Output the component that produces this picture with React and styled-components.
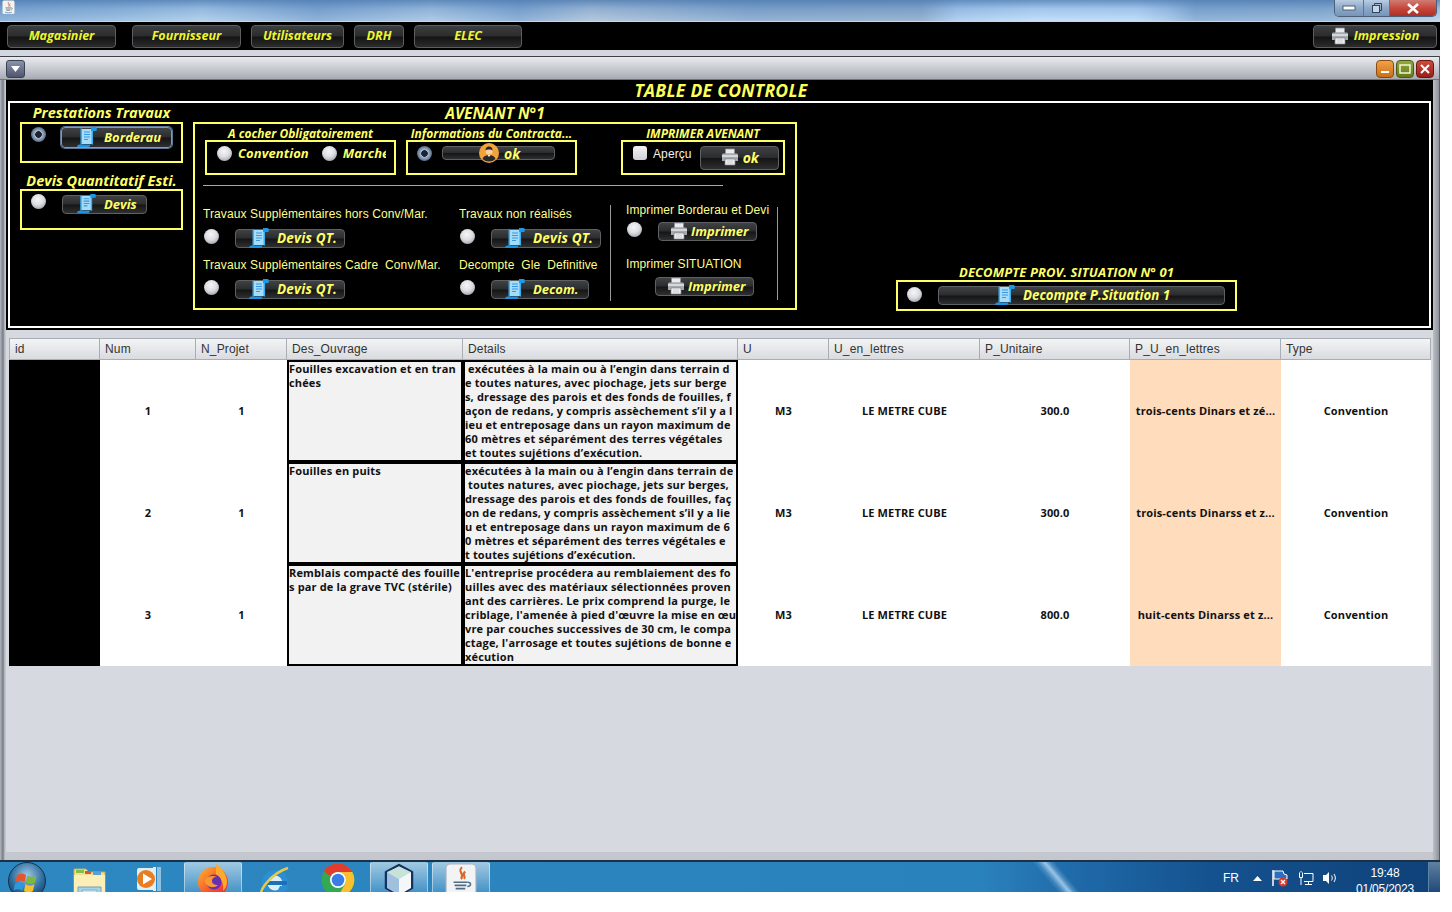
import React from 'react';
import styled, { createGlobalStyle } from 'styled-components';

const Global = createGlobalStyle`
  html, body { margin: 0; padding: 0; background: #fff; }
  * { box-sizing: border-box; }
`;
const UI = `"Open Sans", "Noto Sans", "Liberation Sans", sans-serif`;
const ARIAL = `"Liberation Sans", Arial, sans-serif`;

const Page = styled.div`
  width: 1440px; height: 892px; overflow: hidden; display: flex; flex-direction: column; background: #d3d8e0;
`;
const TitleBar = styled.div`
  height: 22px; flex: none; display: flex; justify-content: space-between; padding-left: 2px;
  border-bottom: 1px solid #c8d6e6;
  background:
    linear-gradient(180deg, rgba(74,120,175,.75) 0%, rgba(90,135,190,.25) 40%, rgba(255,255,255,.18) 100%),
    linear-gradient(90deg, #7ba5d2 0%, #8db5dc 8%, #a5c8e8 14%, #7ba3d0 22%, #9fc0e0 30%, #7ba3cf 36%, #a5bdd6 41%, #7fa3ca 52%, #86a6c8 64%, #a5c9ee 66.500%, #b8d9f9 72%, #b5d6f7 79%, #a0c4e8 81%, #7fa6cf 83%, #86abd0 92%, #b5cde2 100%);
`;
const WinControls = styled.div`
  width: 103px; height: 17px; margin-right: 3px; display: flex; border: 1px solid #4a5f78; border-top: 0;
  border-radius: 0 0 5px 5px; overflow: hidden;
`;
const WinBtn = styled.div`
  width: ${p => p.$w}px; display: flex; align-items: center; justify-content: center;
  background: ${p => p.$close ? 'linear-gradient(180deg,#cf7d72 0%,#c8443a 55%,#a93226 100%)' : 'linear-gradient(180deg,#b9cde3,#8da9c8 50%,#7595b9)'};
  & + & { border-left: 1px solid #5c7590; }
`;
const Toolbar = styled.div`
  height: 28px; flex: none; background: #000; display: flex; align-items: flex-start; padding: 3px 3px 0 7px;
`;
const ToolBtn = styled.div`
  width: ${p => p.$w}px; height: 23px; margin-right: ${p => p.$mr || 0}px; margin-left: ${p => p.$auto ? 'auto' : '0'};
  padding-bottom: 2px;
  border: 1px solid #5c5e62; border-radius: 4px; display: flex; align-items: center; justify-content: center; gap: 5px;
  background: linear-gradient(180deg, #3d3e40 0%, #2a2b2c 48%, #141414 52%, #2b2b2c 100%);
  color: #eef62a; font: italic 700 12.500px ${UI};
`;
const Strip = styled.div` height: 6px; flex: none; background: #d3d8e0; `;
const Frame = styled.div`
  flex: none; height: 804px; display: flex; flex-direction: column; padding: 0 6px 8px;
  border-top: 1px solid #3e4046; border-right: 1px solid #5a5d63;
  background: linear-gradient(90deg, #b3b7bf 0, #777c85 3px, #c4c7cd 5px, #c4c7cd 1432px, #8e929a 100%);
`;
const FrameHead = styled.div`
  margin: 0 -6px; height: 23px; flex: none; padding: 3px 5px 0 6px; display: flex; justify-content: space-between;
  border-bottom: 1px solid #6f737a;
  background: linear-gradient(180deg, #e8eaed 0%, #c6c9cf 55%, #a8abb3 100%);
`;
const MenuBtn = styled.div`
  width: 19px; height: 18px; border: 1px solid #3a4152; border-radius: 3px; display: flex; align-items: center; justify-content: center;
  background: linear-gradient(180deg, #8a93a8, #4d566e);
`;
const HeadBtns = styled.div` display: flex; gap: 2px; `;
const HeadBtn = styled.div`
  width: 18px; height: 18px; border-radius: 4px; border: 1px solid ${p => p.$edge}; display: flex; align-items: center; justify-content: center;
  background: linear-gradient(180deg, ${p => p.$from}, ${p => p.$to});
`;
const Panel = styled.div`
  background: #000; height: 250px; flex: none; padding: 0 2px 2px; display: flex; flex-direction: column;
`;
const MainTitle = styled.div`
  height: 21px; flex: none; text-align: center; color: #ffff5a; font: italic 700 17.500px/21px ${UI}; letter-spacing: .3px; padding-left: 3px;
`;
const WhiteBox = styled.div`
  flex: 1; border: 2px solid #fff; display: flex; padding-left: 10px; gap: 10px; align-items: flex-start;
`;
const LeftCol = styled.div` width: 163px; flex: none; display: flex; flex-direction: column; `;
const SecTitle = styled.div`
  height: ${p => p.$h}px; margin-top: ${p => p.$mt || 0}px; line-height: ${p => p.$lh || p.$h}px; text-align: center; white-space: nowrap;
  color: #ffff66; font-family: ${UI}; font-style: italic; font-weight: 700; font-size: ${p => p.$fs || 14.5}px; letter-spacing: ${p => p.$ls ?? 0}px;
`;
const YBox = styled.div`
  width: ${p => p.$w}px; height: ${p => p.$h}px; border: 2px solid #ffff66; display: flex; align-items: flex-start;
  padding: ${p => p.$pad || '0'};
`;
const Radio = styled.span`
  width: 15px; height: 15px; flex: none; border-radius: 50%; display: block; margin: ${p => p.$m || 0};
  background: ${p => p.$on
    ? 'radial-gradient(circle at 50% 50%, #1c2430 0 3px, #a8bad0 3.6px, #7f92ab 5.600px, #556a85 7.500px)'
    : 'radial-gradient(circle at 45% 35%, #f6f6f8 0, #dcdde2 45%, #a3a5ad 80%, #777a83 100%)'};
`;
const Check = styled.span`
  width: 14px; height: 14px; flex: none; border-radius: 3px; display: block;
  background: linear-gradient(180deg, #f4f4f6, #cfd1d6);
`;
const GBtn = styled.div`
  width: ${p => p.$w}px; height: ${p => p.$h || 19}px; flex: none; margin: ${p => p.$m || 0}; display: flex; align-items: center;
  gap: ${p => p.$gap ?? 8}px; padding: 0 0 ${p => p.$pb ?? 2}px ${p => p.$pl || 0}px;
  border: 1px solid ${p => p.$focus ? '#7f9bbd' : '#5e6064'}; border-radius: 4px; box-shadow: ${p => p.$focus ? '0 0 0 1px #5b7694' : 'none'};
  background: linear-gradient(180deg, #404143 0%, #2b2c2d 48%, #151515 52%, #2e2f30 100%);
  color: #ffff66; font-family: ${UI}; font-style: italic; font-weight: 700; font-size: ${p => p.$fs || 13}px; letter-spacing: ${p => p.$ls || 0}px; white-space: nowrap;
`;
const OptLabel = styled.span`
  color: #ffff66; font: italic 700 13px/14px ${UI}; letter-spacing: .1px; margin: ${p => p.$m || 0}; white-space: nowrap;
  ${p => p.$clip && `width: ${p.$clip}px; overflow: hidden;`}
`;
const Avenant = styled.div` width: 604px; flex: none; display: flex; flex-direction: column; `;
const AvBox = styled.div`
  height: 188px; border: 2px solid #ffff66; display: flex; flex-direction: column; padding-left: 10px;
`;
const TopRow = styled.div` display: flex; height: 51px; flex: none; `;
const Group = styled.div` margin-left: ${p => p.$ml || 0}px; `;
const Sep = styled.div` width: 520px; height: 1px; background: #a8a8a8; margin: 10px 0 0 -2px; flex: none; `;
const Lower = styled.div` display: flex; margin-left: -2px; `;
const LCol = styled.div` width: ${p => p.$w}px; flex: none; padding-top: 20px; `;
const PLabel = styled.div`
  height: 14px; font: 12px/${p => p.$lh || 16}px ${ARIAL}; color: ${p => p.$white ? '#f2f2f2' : '#ffff8c'}; white-space: pre; letter-spacing: .1px;
  margin: ${p => p.$m || 0};
`;
const BtnRow = styled.div` display: flex; align-items: flex-start; margin-top: ${p => p.$mt ?? 9}px; margin-bottom: ${p => p.$mb ?? 9}px; padding-left: ${p => p.$pl || 0}px; `;
const VLine = styled.div` width: 1px; height: ${p => p.$h}px; background: #9a9a9a; margin-top: ${p => p.$mt}px; flex: none; `;
const PrintCol = styled.div` width: 166px; flex: none; padding: 16px 0 0 15px; `;
const Decompte = styled.div` width: 341px; flex: none; margin: 161px 0 0 89px; display: flex; flex-direction: column; `;

const TableArea = styled.div`
  flex: 1; background: #d6d9df; padding: 8px 0 0 3px;
`;
const Grid = styled.div`
  display: grid; width: 1422px;
  grid-template-columns: 91px 96px 91px 176px 275px 91px 151px 150px 151px 150px;
  grid-template-rows: 22px repeat(3, 102px);
`;
const Th = styled.div`
  font: 12px/21px ${ARIAL}; color: #333; padding-left: 5px; letter-spacing: .15px;
  border-top: 1px solid #a9adb4; border-right: 1px solid #a9adb4; border-bottom: 1px solid #a9adb4;
  border-left: ${p => p.$first ? '1px solid #a9adb4' : '0'};
  background: linear-gradient(180deg, #f3f4f5, #d9dbdf);
`;
const Td = styled.div`
  background: ${p => p.$bg || '#fff'}; display: flex; align-items: center; justify-content: center; padding-bottom: 2px;
  font: 700 11px ${UI}; color: #111; white-space: nowrap; letter-spacing: .15px;
`;
const TextCell = styled.div`
  background: #f2f2f2; border: 2px solid #000; font: 700 11px/14px ${UI}; color: #111; overflow: hidden; letter-spacing: .15px;
`;
const Line = styled.div` white-space: pre; height: 14px; `;

const Taskbar = styled.div`
  height: 32px; flex: none; display: flex; align-items: flex-start; position: relative; overflow: hidden;
  border-top: 2px solid #1d3146;
  background: linear-gradient(90deg, #2d87c1 0%, #2a82bc 68%, #1f69a8 75%, #14528f 84%, #0f4178 100%);
`;
const Streak = styled.div`
  position: absolute; left: 1026px; top: 0; width: 60px; height: 32px;
  background: linear-gradient(50deg, transparent 38%, rgba(190,225,250,.2) 44%, rgba(190,225,250,.75) 52%, rgba(190,225,250,.25) 58%, transparent 64%);
`;
const Slot = styled.div`
  width: ${p => p.$w}px; height: 30px; flex: none; margin-left: ${p => p.$ml || 0}px; padding-top: ${p => p.$pt ?? 3}px; display: flex; justify-content: center; position: relative;
  ${p => p.$active && `
    background: linear-gradient(180deg, rgba(255,255,255,.55), rgba(255,255,255,.12));
    border: 1px solid rgba(255,255,255,.45); border-bottom: 0; border-radius: 2px 2px 0 0;
  `}
`;
const Tray = styled.div`
  margin-left: auto; display: flex; height: 30px; color: #fff; font: 12px ${ARIAL}; position: relative;
`;
const TrayText = styled.div` width: ${p => p.$w}px; padding: ${p => p.$pt}px 0 0 5px; `;
const TrayIcon = styled.div` width: ${p => p.$w}px; padding-top: ${p => p.$pt}px; display: flex; justify-content: center; `;
const Clock = styled.div` width: 86px; text-align: center; font: 12px/16px ${ARIAL}; padding-top: 3px; letter-spacing: -.2px; `;
const ShowDesk = styled.div`
  width: 12px; height: 32px; border-left: 1px solid #5f83a6; background: linear-gradient(180deg, #5f80a0, #1b4674);
`;

const ScrollIcon = ({ s = 20 }) => (
  <svg width={s} height={s} viewBox="0 0 20 20">
    <path d="M0 20h11c1.500 0 2.500-1 2.500-2.500H2.500C1 17.500 0 18.500 0 20z" fill="#1a93e4" />
    <path d="M4 2h11v15H4z" fill="#a4dcf9" />
    <path d="M3.500 1.500H5v16H3.500zM14.500 1.500H16v16h-1.500z" fill="#37aef0" />
    <path d="M14 0h4.500C20 0 20 2 19.500 4H14z" fill="#1a9be8" />
    <path d="M7 5h6M7 7.500h6M7 10h6M7 12.500h4" stroke="#3b97de" strokeWidth="1.100" />
  </svg>
);
const PrinterIcon = ({ s = 18 }) => (
  <svg width={s} height={s} viewBox="0 0 18 18">
    <path d="M4.500 1h9v5h-9z" fill="#e9ebee" stroke="#8d9096" strokeWidth=".8" />
    <path d="M1 7c0-1 .6-1.500 1.500-1.500h13c.9 0 1.500.5 1.500 1.500v6H1z" fill="#a6a9ae" />
    <path d="M1 7h16v2H1z" fill="#d5d7da" />
    <path d="M4 11h10v6H4z" fill="#fff" stroke="#7c7f85" strokeWidth=".8" />
    <path d="M5.500 13h7M5.500 15h7" stroke="#a8abb0" strokeWidth=".8" />
  </svg>
);
const AvatarIcon = () => (
  <svg width="20" height="20" viewBox="0 0 20 20">
    <circle cx="10" cy="10" r="10" fill="#f2a33c" />
    <path d="M3.500 16c1-3 3.500-4 6.500-4s5.500 1 6.500 4a9.500 9.500 0 0 1-13 0z" fill="#2a2a2a" />
    <circle cx="10" cy="8" r="3.500" fill="#f7d3ac" />
    <path d="M6.500 7.500c0-3 1.500-4 3.500-4s3.500 1 3.500 4c-1-1.500-6-1.500-7 0z" fill="#2e2118" />
    <path d="M8.500 12l1.500 2 1.500-2z" fill="#fff" />
  </svg>
);
const WinOrb = () => (
  <svg width="38" height="38" viewBox="0 0 38 38">
    <defs><radialGradient id="orb" cx=".5" cy=".35" r=".7"><stop offset="0" stopColor="#9fc8e4" /><stop offset=".6" stopColor="#2f6f9f" /><stop offset="1" stopColor="#123a5c" /></radialGradient></defs>
    <circle cx="19" cy="19" r="18.500" fill="url(#orb)" stroke="#0f3350" />
    <path d="M9 13c3-2 6-2 9 0l-1.500 7c-3-2-6-2-9 0z" fill="#e8532b" />
    <path d="M19.500 13.500c3 2 6 2 9 0l-1.500 7c-3 2-6 2-9 0z" fill="#7dba3b" />
    <path d="M7 21.500c3-2 6-2 9 0l-1.500 7c-3-2-6-2-9 0z" fill="#2f97de" />
    <path d="M17.500 22c3 2 6 2 9 0l-1.500 7c-3 2-6 2-9 0z" fill="#f5c02c" />
  </svg>
);
const FolderIcon = () => (
  <svg width="34" height="34" viewBox="0 0 34 34">
    <path d="M1 4h12l3 3h16v26H1z" fill="#f6e08f" stroke="#c9a94e" />
    <path d="M3 5h8v3H3z" fill="#7ec24a" /><path d="M12 6h6v3h-6z" fill="#d4573a" /><path d="M20 7h8v3h-8z" fill="#5a9fd8" />
    <path d="M1 10h31v23H1z" fill="#fbeeb6" />
    <path d="M5 22h23v11H5z" fill="#a9d3e6" stroke="#6ea2bd" />
    <path d="M9 25h15v8H9z" fill="#cfe6ef" stroke="#7fb0c8" />
  </svg>
);
const MediaIcon = () => (
  <svg width="26" height="28" viewBox="0 0 26 28">
    <path d="M21 2h4v24h-4z" fill="#a9cfe6" opacity=".8" /><path d="M17 2h3v24h-3z" fill="#d6ebf6" />
    <rect x="1" y="3" width="18" height="22" rx="2" fill="#dfeef7" />
    <circle cx="10" cy="14" r="9" fill="#ea7d22" />
    <path d="M7 8.500l9 5.500-9 5.500z" fill="#fff" />
  </svg>
);
const FirefoxIcon = () => (
  <svg width="32" height="34" viewBox="0 0 32 34">
    <defs><linearGradient id="ff" x1="0" y1="0" x2="1" y2="1"><stop offset="0" stopColor="#ffb52e" /><stop offset=".6" stopColor="#f5512c" /><stop offset="1" stopColor="#e8264e" /></linearGradient></defs>
    <circle cx="16" cy="19" r="15" fill="url(#ff)" />
    <path d="M19 1c6 4 11 11 11 18 0 4-2 7-4 9 1-6-1-13-7-16z" fill="#ffa92c" />
    <circle cx="17" cy="19" r="7.500" fill="#6a2fb0" />
    <path d="M8 17c3-4 8-5 12-3-4 0-5 2-5 4 0 3 3 4 6 4-3 3-8 3-11 0-2-1-2-3-2-5z" fill="#f79a2e" />
  </svg>
);
const IEIcon = () => (
  <svg width="34" height="32" viewBox="0 0 34 32">
    <circle cx="17" cy="18" r="13" fill="#2c8fd4" />
    <circle cx="17" cy="18" r="7.500" fill="#d9eef9" />
    <path d="M9 16h20v4H9z" fill="#1d6fb8" /><path d="M22 21h8l-1 4H20z" fill="#2c8fd4" />
    <path d="M3 30C2 24 14 8 30 3" fill="none" stroke="#e5c94a" strokeWidth="2.500" />
  </svg>
);
const ChromeIcon = () => (
  <svg width="34" height="34" viewBox="0 0 34 34">
    <circle cx="17" cy="17" r="16.500" fill="#34a853" />
    <path d="M17 .5A16.500 16.500 0 0 1 31.300 9H17a8 8 0 0 0-7.200 4.500L3 8A16.500 16.500 0 0 1 17 .5z" fill="#e33b2e" />
    <path d="M31.300 9A16.500 16.500 0 0 1 17 33.500L24 21a8 8 0 0 0-7-12z" fill="#fbc02d" />
    <circle cx="17" cy="17" r="8" fill="#fff" /><circle cx="17" cy="17" r="6.300" fill="#3b7de8" />
  </svg>
);
const CubeIcon = () => (
  <svg width="32" height="34" viewBox="0 0 32 34">
    <path d="M16 2l13 7v16l-13 7-13-7V9z" fill="#d9e6ec" stroke="#16305f" strokeWidth="2.500" strokeLinejoin="round" />
    <path d="M16 16l12-7v16l-12 7z" fill="#f4f7f9" /><path d="M16 16L4 9v16l12 7z" fill="#9fc0de" />
    <path d="M16 3.500L28 9l-12 7L4 9z" fill="#c7e2d8" />
  </svg>
);
const JavaIcon = ({ s = 30 }) => (
  <svg width={s} height={s * 1.1} viewBox="0 0 30 33">
    <rect x="1" y="1" width="28" height="32" rx="4" fill="#f2f3f5" stroke="#aeb6c0" />
    <path d="M16 4c-5 4 3 6-1 11M19 8c-4 3 1 4-1 7" fill="none" stroke="#d7682a" strokeWidth="2" />
    <path d="M8 18h13M9 21h11M10 24h9M7 28c4 2 12 2 16 0" fill="none" stroke="#4d6d86" strokeWidth="1.500" />
    <path d="M21 18c4 0 4 4 0 4" fill="none" stroke="#4d6d86" strokeWidth="1.300" />
  </svg>
);

const rows = [
  { n: 1, des: ['Fouilles excavation et en tran', 'chées'], det: [' exécutées à la main ou à l’engin dans terrain d', 'e toutes natures, avec piochage, jets sur berge', 's, dressage des parois et des fonds de fouilles, f', 'açon de redans, y compris assèchement s’il y a l', 'ieu et entreposage dans un rayon maximum de', '60 mètres et séparément des terres végétales', 'et toutes sujétions d’exécution.'], prix: '300.0', lettres: 'trois-cents Dinars et zé...' },
  { n: 2, des: ['Fouilles en puits'], det: ['exécutées à la main ou à l’engin dans terrain de', ' toutes natures, avec piochage, jets sur berges,', 'dressage des parois et des fonds de fouilles, faç', 'on de redans, y compris assèchement s’il y a lie', 'u et entreposage dans un rayon maximum de 6', '0 mètres et séparément des terres végétales e', 't toutes sujétions d’exécution.'], prix: '300.0', lettres: 'trois-cents Dinarss et z...' },
  { n: 3, des: ['Remblais compacté des fouille', 's par de la grave TVC (stérile)'], det: ['L\'entreprise procédera au remblaiement des fo', 'uilles avec des matériaux sélectionnées proven', 'ant des carrières. Le prix comprend la purge, le', 'criblage, l\'amenée à pied d\'œuvre la mise en œu', 'vre par couches successives de 30 cm, le compa', 'ctage, l\'arrosage et toutes sujétions de bonne e', 'xécution'], prix: '800.0', lettres: 'huit-cents Dinarss et z...' },
];
const heads = ['id', 'Num', 'N_Projet', 'Des_Ouvrage', 'Details', 'U', 'U_en_lettres', 'P_Unitaire', 'P_U_en_lettres', 'Type'];

export default function App() {
  return (
    <Page>
      <Global />
      <TitleBar>
        <JavaIcon s={13} />
        <WinControls>
          <WinBtn $w={28}><svg width="14" height="6"><rect x="1" y="1" width="12" height="4" fill="#fff" stroke="#4a6075" /></svg></WinBtn>
          <WinBtn $w={26}><svg width="12" height="12" fill="none" stroke="#30455c"><rect x="1.500" y="3.500" width="7" height="7" fill="#c7d6e6" /><path d="M3.500 3V1.500h7v7H9" /></svg></WinBtn>
          <WinBtn $w={47} $close><svg width="14" height="11" viewBox="0 0 14 11"><path d="M2 1l10 9M12 1L2 10" stroke="#fff" strokeWidth="2.600" /></svg></WinBtn>
        </WinControls>
      </TitleBar>
      <Toolbar>
        <ToolBtn $w={109} $mr={16}>Magasinier</ToolBtn>
        <ToolBtn $w={109} $mr={10}>Fournisseur</ToolBtn>
        <ToolBtn $w={93} $mr={10}>Utilisateurs</ToolBtn>
        <ToolBtn $w={50} $mr={10}>DRH</ToolBtn>
        <ToolBtn $w={108}>ELEC</ToolBtn>
        <ToolBtn $w={124} $auto><PrinterIcon />Impression</ToolBtn>
      </Toolbar>
      <Strip />
      <Frame>
        <FrameHead>
          <MenuBtn><svg width="9" height="6"><path d="M0 0h9L4.500 6z" fill="#fff" /></svg></MenuBtn>
          <HeadBtns>
            <HeadBtn $edge="#8a4a10" $from="#f0a24a" $to="#c96f15"><svg width="10" height="10"><rect x="1" y="7" width="8" height="2" fill="#fff" /></svg></HeadBtn>
            <HeadBtn $edge="#4c5c14" $from="#94a83c" $to="#66791b"><svg width="12" height="10" fill="none"><rect x="1" y="1" width="10" height="8" stroke="#f2f5d9" strokeWidth="1.500" /></svg></HeadBtn>
            <HeadBtn $edge="#6e1610" $from="#cf4a3c" $to="#98211a"><svg width="10" height="10"><path d="M1 1l8 8M9 1L1 9" stroke="#fff" strokeWidth="2" /></svg></HeadBtn>
          </HeadBtns>
        </FrameHead>
        <Panel>
          <MainTitle>TABLE DE CONTROLE</MainTitle>
          <WhiteBox>
            <LeftCol>
              <SecTitle $h={19}>Prestations Travaux</SecTitle>
              <YBox $w={163} $h={41} $pad="3px 0 0 9px">
                <Radio $on />
                <GBtn $w={111} $h={21} $m="0 0 0 15px" $pl={15} $gap={7} $focus><ScrollIcon />Borderau</GBtn>
              </YBox>
              <SecTitle $h={17} $mt={9}>Devis Quantitatif Esti.</SecTitle>
              <YBox $w={163} $h={41} $pad="3px 0 0 9px">
                <Radio />
                <GBtn $w={85} $m="1px 0 0 16px" $pl={14} $gap={8}><ScrollIcon s={19} />Devis</GBtn>
              </YBox>
            </LeftCol>
            <Avenant>
              <SecTitle $h={19} $lh={21} $fs={15.500}>AVENANT N°1</SecTitle>
              <AvBox>
                <TopRow>
                  <Group>
                    <SecTitle $h={16} $lh={19} $fs={12}>A cocher Obligatoirement</SecTitle>
                    <YBox $w={191} $h={35} $pad="4px 0 0 10px">
                      <Radio />
                      <OptLabel $m="0 0 0 6px">Convention</OptLabel>
                      <Radio $m="0 0 0 13px" />
                      <OptLabel $m="0 0 0 6px" $clip={43}>Marché</OptLabel>
                    </YBox>
                  </Group>
                  <Group $ml={10}>
                    <SecTitle $h={16} $lh={19} $fs={12}>Informations du Contracta...</SecTitle>
                    <YBox $w={171} $h={35} $pad="4px 0 0 9px">
                      <Radio $on />
                      <GBtn $w={113} $h={14} $m="0 0 0 10px" $pl={36} $gap={5} $pb={0} $fs={14}><AvatarIcon />ok</GBtn>
                    </YBox>
                  </Group>
                  <Group $ml={44}>
                    <SecTitle $h={16} $lh={19} $fs={12}>IMPRIMER AVENANT</SecTitle>
                    <YBox $w={164} $h={35} $pad="4px 0 0 10px">
                      <Check />
                      <PLabel $white $lh={14} $m="1px 0 0 6px">Aperçu</PLabel>
                      <GBtn $w={79} $h={24} $m="0 0 0 8px" $pl={20} $gap={4} $fs={14}><PrinterIcon />ok</GBtn>
                    </YBox>
                  </Group>
                </TopRow>
                <Sep />
                <Lower>
                  <LCol $w={256}>
                    <PLabel>Travaux Supplémentaires hors Conv/Mar.</PLabel>
                    <BtnRow $pl={1}><Radio /><GBtn $w={110} $m="0 0 0 16px" $pl={13} $gap={8} $fs={13.500} $ls={.2}><ScrollIcon />Devis QT.</GBtn></BtnRow>
                    <PLabel>Travaux Supplémentaires Cadre  Conv/Mar.</PLabel>
                    <BtnRow $pl={1}><Radio /><GBtn $w={110} $m="0 0 0 16px" $pl={13} $gap={8} $fs={13.500} $ls={.2}><ScrollIcon />Devis QT.</GBtn></BtnRow>
                  </LCol>
                  <LCol $w={151}>
                    <PLabel>Travaux non réalisés</PLabel>
                    <BtnRow $pl={1}><Radio /><GBtn $w={110} $m="0 0 0 16px" $pl={13} $gap={8} $fs={13.500} $ls={.2}><ScrollIcon />Devis QT.</GBtn></BtnRow>
                    <PLabel>Decompte  Gle  Definitive</PLabel>
                    <BtnRow $pl={1}><Radio /><GBtn $w={98} $m="0 0 0 16px" $pl={13} $gap={8}><ScrollIcon />Decom.</GBtn></BtnRow>
                  </LCol>
                  <VLine $h={96} $mt={19} />
                  <PrintCol>
                    <PLabel>Imprimer Borderau et Devi</PLabel>
                    <BtnRow $mt={6} $mb={15} $pl={1}><Radio /><GBtn $w={99} $m="0 0 0 16px" $pl={11} $gap={3}><PrinterIcon />Imprimer</GBtn></BtnRow>
                    <PLabel>Imprimer SITUATION</PLabel>
                    <BtnRow $mt={7} $mb={0} $pl={29}><GBtn $w={99} $pl={11} $gap={3}><PrinterIcon />Imprimer</GBtn></BtnRow>
                  </PrintCol>
                  <VLine $h={93} $mt={21} />
                </Lower>
              </AvBox>
            </Avenant>
            <Decompte>
              <SecTitle $h={16} $fs={13} $ls={.1}>DECOMPTE PROV. SITUATION N° 01</SecTitle>
              <YBox $w={341} $h={31} $pad="4px 0 0 9px">
                <Radio $m="1px 0 0 0" />
                <GBtn $w={287} $m="0 0 0 16px" $pl={56} $gap={8} $fs={13.300}><ScrollIcon />Decompte P.Situation 1</GBtn>
              </YBox>
            </Decompte>
          </WhiteBox>
        </Panel>
        <TableArea>
          <Grid>
            {heads.map((h, i) => <Th key={h} $first={i === 0}>{h}</Th>)}
            {rows.map(r => (
              <React.Fragment key={r.n}>
                <Td $bg="#000" />
                <Td>{r.n}</Td>
                <Td>1</Td>
                <TextCell>{r.des.map((l, i) => <Line key={i}>{l}</Line>)}</TextCell>
                <TextCell>{r.det.map((l, i) => <Line key={i}>{l}</Line>)}</TextCell>
                <Td>M3</Td>
                <Td>LE METRE CUBE</Td>
                <Td>{r.prix}</Td>
                <Td $bg="#ffdcbc">{r.lettres}</Td>
                <Td>Convention</Td>
              </React.Fragment>
            ))}
          </Grid>
        </TableArea>
      </Frame>
      <Taskbar>
        <Streak />
        <Slot $w={46} $ml={4} $pt={0}><WinOrb /></Slot>
        <Slot $w={57} $ml={11}><FolderIcon /></Slot>
        <Slot $w={43} $ml={9}><MediaIcon /></Slot>
        <Slot $w={58} $ml={14} $active $pt={0}><FirefoxIcon /></Slot>
        <Slot $w={60} $ml={3}><IEIcon /></Slot>
        <Slot $w={65} $pt={1}><ChromeIcon /></Slot>
        <Slot $w={58} $active $pt={0}><CubeIcon /></Slot>
        <Slot $w={58} $ml={4} $active $pt={0}><JavaIcon s={32} /></Slot>
        <Tray>
          <TrayText $w={30} $pt={9}>FR</TrayText>
          <TrayIcon $w={18} $pt={13}><svg width="9" height="6"><path d="M0 6l4.500-5L9 6z" fill="#fff" /></svg></TrayIcon>
          <TrayIcon $w={28} $pt={7}><svg width="18" height="18" viewBox="0 0 18 18"><path d="M2 1v16" stroke="#fff" strokeWidth="1.500" /><path d="M3 2h9l1 3 3 1v4H3z" fill="#2f6fbf" stroke="#fff" /><circle cx="12" cy="13" r="4.500" fill="#d8382e" /><path d="M10 11l4 4M14 11l-4 4" stroke="#fff" strokeWidth="1.300" /></svg></TrayIcon>
          <TrayIcon $w={24} $pt={8}><svg width="16" height="16" viewBox="0 0 16 16" fill="none" stroke="#fff"><path d="M1.500 2.500v5h3v-5M3 1v1.500M3 7.500V15M6 3.500h9v8H6M7 14.500h7M10.500 11.500v3" /></svg></TrayIcon>
          <TrayIcon $w={24} $pt={9}><svg width="16" height="14" viewBox="0 0 16 14"><path d="M1 4h3l3-3v12l-3-3H1z" fill="#fff" /><path d="M9.500 4.500c1 1.500 1 3.500 0 5M12 3c1.800 2.500 1.800 5.500 0 8" fill="none" stroke="#fff" /></svg></TrayIcon>
          <Clock>19:48<br />01/05/2023</Clock>
          <ShowDesk />
        </Tray>
      </Taskbar>
    </Page>
  );
}
